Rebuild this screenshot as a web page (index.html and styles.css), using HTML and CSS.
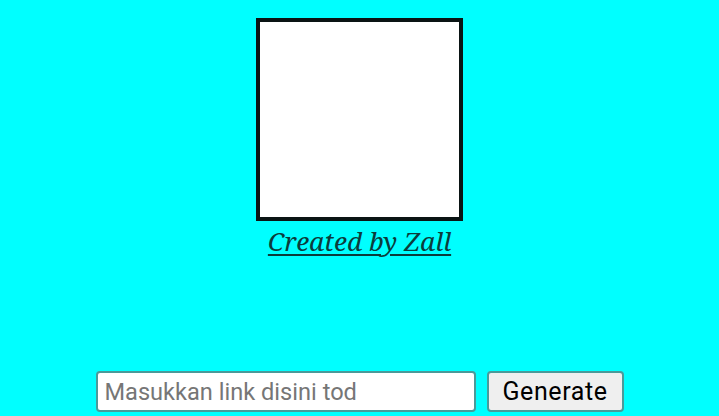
FILE: index.html
```html
<!DOCTYPE html>
<html>
<head>
<meta charset="utf-8">
<link rel="stylesheet" href="styles.css">
</head>
<body>
<div class="page">
  <div class="qr"></div>
  <a class="credit" href="#">Created by Zall</a>
  <div class="form">
    <input class="link-input" type="text" placeholder="Masukkan link disini tod">
    <button class="gen-btn">Generate</button>
  </div>
</div>
</body>
</html>
```
FILE: styles.css
```css
html, body {
  margin: 0;
  padding: 0;
  background: #00ffff;
}
.page {
  display: flex;
  flex-direction: column;
  align-items: center;
  padding-top: 18px;
  width: 719px;
  height: 416px;
  box-sizing: border-box;
}
.qr {
  width: 199px;
  height: 195px;
  background: #ffffff;
  border: 4px solid #0a1414;
}
.credit {
  margin-top: 4px;
  font-family: "Noto Serif", "DejaVu Serif", serif;
  font-style: italic;
  font-size: 26.3px;
  line-height: 32px;
  color: #0b3c3c;
  text-decoration: underline;
  text-decoration-thickness: 2px;
  text-underline-offset: 3px;
}
.form {
  margin-top: 114px;
  display: flex;
  gap: 11px;
  align-items: center;
}
.link-input {
  width: 380px;
  height: 41px;
  box-sizing: border-box;
  border: 2px solid #4a9a9a;
  border-radius: 4px;
  background: #ffffff;
  font-family: Roboto, "Noto Sans", sans-serif;
  font-size: 23.6px;
  padding: 0 7px;
  color: #333;
  outline: none;
}
.link-input::placeholder {
  color: #767676;
}
.gen-btn {
  width: 137px;
  height: 41px;
  box-sizing: border-box;
  border: 2px solid #4a9a9a;
  border-radius: 4px;
  background: #efefef;
  font-family: Roboto, "Noto Sans", sans-serif;
  font-size: 25px;
  letter-spacing: 0.6px;
  color: #000;
  padding: 0;
}
```
